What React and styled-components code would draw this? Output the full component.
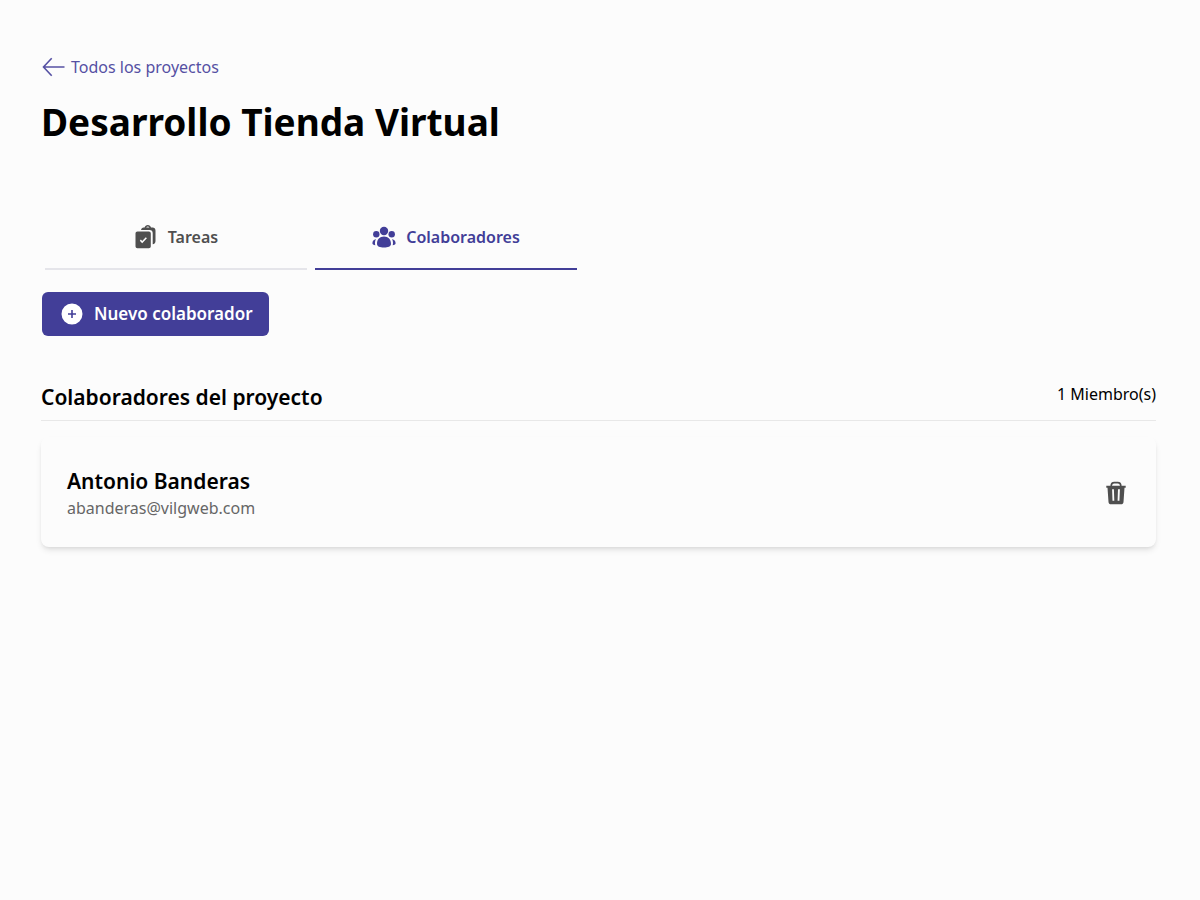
import React from "react";
import styled, { createGlobalStyle } from "styled-components";

const GlobalStyle = createGlobalStyle`
  *, *::before, *::after { box-sizing: border-box; }
  body {
    margin: 0;
    background: #fcfcfc;
    color: #000;
    font-family: "Noto Sans", "Open Sans", sans-serif;
    font-size: 16px;
    line-height: 24px;
  }
  h1, h2, h3, p, ul { margin: 0; padding: 0; }
  button { font: inherit; cursor: pointer; }
`;

const Page = styled.main`
  padding: 55px 44px 44px 41px;
`;

const BackLink = styled.a`
  display: inline-flex;
  align-items: center;
  gap: 6px;
  height: 24px;
  color: #5550a3;
  text-decoration: none;
`;

const Title = styled.h1`
  margin-top: 11px;
  font-size: 37px;
  font-weight: 700;
  line-height: 52px;
`;

const Tabs = styled.div`
  display: flex;
  gap: 8px;
  margin-top: 58px;
  padding: 0 4px;
`;

const Tab = styled.button`
  display: flex;
  flex: 0 1 262px;
  align-items: center;
  justify-content: center;
  gap: 10px;
  height: 64px;
  padding: 0;
  border: 0;
  border-bottom: 2px solid ${(p) => (p.$active ? "#423e98" : "#e5e5ea")};
  background: none;
  color: ${(p) => (p.$active ? "#423e98" : "#4f4f4f")};
  font-weight: 600;
`;

const PrimaryButton = styled.button`
  display: inline-flex;
  align-items: center;
  gap: 10px;
  height: 44px;
  margin: 22px 0 0 1px;
  padding: 0 16px 0 18px;
  border: 0;
  border-radius: 6px;
  background: #423e98;
  color: #fff;
  font-size: 17px;
  font-weight: 600;
`;

const SectionHeader = styled.header`
  display: flex;
  align-items: flex-start;
  justify-content: space-between;
  margin-top: 46px;
  padding-bottom: 8px;
  border-bottom: 1px solid #e8e8e8;
`;

const SectionTitle = styled.h2`
  font-size: 21px;
  font-weight: 600;
  line-height: 30px;
`;

const Count = styled.p`
  line-height: 24px;
`;

const MemberList = styled.ul`
  margin-top: 16px;
  list-style: none;
`;

const MemberCard = styled.li`
  display: flex;
  align-items: center;
  justify-content: space-between;
  padding: 29px 28px 27px 26px;
  border-radius: 8px;
  box-shadow: 0 4px 6px -1px rgba(0, 0, 0, 0.1), 0 2px 4px -2px rgba(0, 0, 0, 0.1);
`;

const MemberName = styled.h3`
  font-size: 21px;
  font-weight: 600;
  line-height: 30px;
`;

const MemberEmail = styled.p`
  color: #666;
  line-height: 24px;
`;

const IconButton = styled.button`
  display: flex;
  padding: 0;
  border: 0;
  background: none;
  color: #4f4f4f;
`;

const Icon = styled.svg.attrs({ viewBox: "0 0 24 24", width: 24, height: 24, "aria-hidden": true })`
  flex: none;
  fill: currentColor;
`;

const ArrowIcon = () => (
  <Icon>
    <path d="M10.700 3.200 2.500 12l8.200 8.800M2.500 12h21" fill="none" stroke="currentColor" strokeWidth="1.600" />
  </Icon>
);

const TasksIcon = () => (
  <Icon>
    <path d="M7 5c.3-1.600 1.200-2.500 2.700-2.500h.9C11 1 12.200 0 13.800 0s2.800 1 3.200 2.500h1.600c1.700 0 2.900 1.200 2.900 2.900V16c0 1.800-1 3-2.800 3.300V8c0-1.800-1.200-3-3-3zm5.200-2.500h3.200c-.3-.6-.9-1-1.600-1s-1.300.4-1.600 1z" />
    <path fillRule="evenodd" d="M3.500 6.500h11.300c1.200 0 2 .8 2 2v12.800c0 1.200-.8 2-2 2H3.500c-1.200 0-2-.8-2-2V8.500c0-1.200.8-2 2-2zm8.300 5.700-3.600 3.700-1.300-1.300-1.100 1.100 2.400 2.500 4.700-4.900z" />
  </Icon>
);

const PeopleIcon = () => (
  <Icon>
    <circle cx="12" cy="6" r="4.200" />
    <circle cx="4.300" cy="9.300" r="3.200" />
    <circle cx="19.700" cy="9.300" r="3.200" />
    <path d="M12 11.600c4.300 0 7 3 7 7.300 0 2.300-3 3.600-7 3.600s-7-1.300-7-3.600c0-4.300 2.700-7.300 7-7.300zM3.900 13.900c-2.200.6-3.500 2.200-3.500 4.400 0 1 1 1.700 2.900 1.900-.6-2.200-.3-4.300.6-6.300zM20.100 13.900c2.200.6 3.500 2.200 3.500 4.400 0 1-1 1.700-2.900 1.900.6-2.200.3-4.300-.6-6.300z" />
  </Icon>
);

const PlusIcon = () => (
  <Icon>
    <path fillRule="evenodd" d="M12 1.500a10.500 10.500 0 1 0 0 21 10.500 10.500 0 0 0 0-21zm-.8 6.500h1.600v3.200H16v1.600h-3.200V16h-1.600v-3.200H8v-1.600h3.200z" />
  </Icon>
);

const TrashIcon = () => (
  <Icon>
    <path d="M7.200 5.200C7.200 3 8.300 1.600 10.300 1.600h3.400c2 0 3.100 1.400 3.100 3.600" fill="none" stroke="currentColor" strokeWidth="1.700" />
    <path fillRule="evenodd" d="M2.300 4.800h19.400v2h-1.200l-1 14.200c-.1 1.500-1.100 2.300-2.500 2.300H7c-1.400 0-2.400-.8-2.500-2.300L3.500 6.800H2.300zm5.800 3.400.4 11.600h1.800L9.900 8.200zm5.900 0-.4 11.600h1.800l.5-11.600z" />
  </Icon>
);

const members = [{ name: "Antonio Banderas", email: "abanderas@vilgweb.com" }];

export default function App() {
  return (
    <>
      <GlobalStyle />
      <Page>
        <BackLink href="#proyectos">
          <ArrowIcon />
          Todos los proyectos
        </BackLink>
        <Title>Desarrollo Tienda Virtual</Title>
        <Tabs role="tablist">
          <Tab type="button" role="tab" aria-selected="false">
            <TasksIcon />
            Tareas
          </Tab>
          <Tab type="button" role="tab" aria-selected="true" $active>
            <PeopleIcon />
            Colaboradores
          </Tab>
        </Tabs>
        <PrimaryButton type="button">
          <PlusIcon />
          Nuevo colaborador
        </PrimaryButton>
        <section>
          <SectionHeader>
            <SectionTitle>Colaboradores del proyecto</SectionTitle>
            <Count>{members.length} Miembro(s)</Count>
          </SectionHeader>
          <MemberList>
            {members.map((m) => (
              <MemberCard key={m.email}>
                <div>
                  <MemberName>{m.name}</MemberName>
                  <MemberEmail>{m.email}</MemberEmail>
                </div>
                <IconButton type="button" aria-label={`Eliminar a ${m.name}`}>
                  <TrashIcon />
                </IconButton>
              </MemberCard>
            ))}
          </MemberList>
        </section>
      </Page>
    </>
  );
}
